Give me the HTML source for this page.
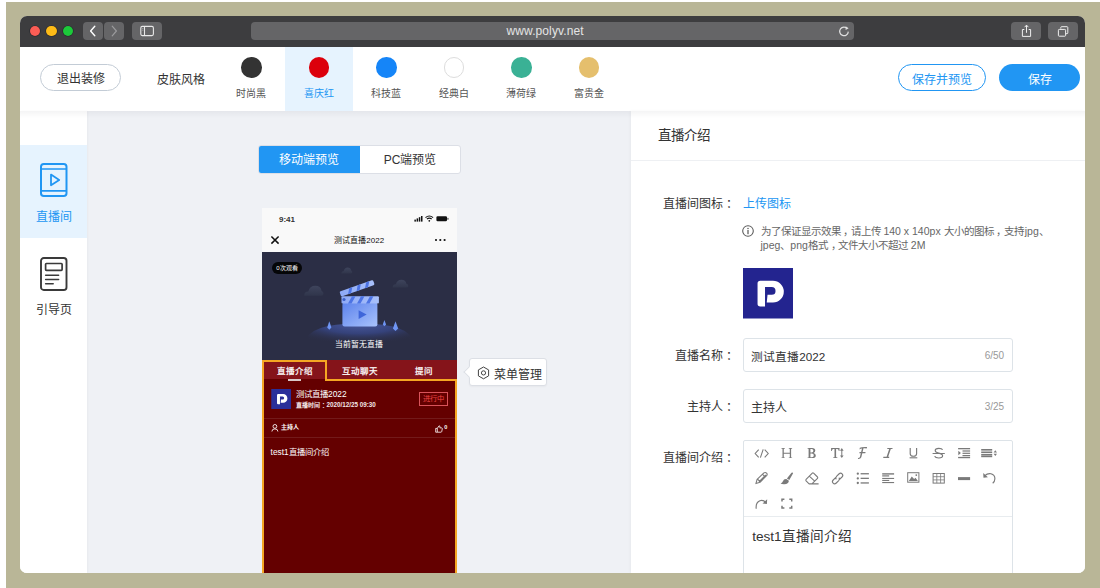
<!DOCTYPE html>
<html lang="zh-CN">
<head>
<meta charset="utf-8">
<style>
*{box-sizing:border-box;margin:0;padding:0}
html,body{width:1100px;height:588px;overflow:hidden;background:#fff;font-family:"Liberation Sans",sans-serif;color:#333}
.abs{position:absolute}
#bg{position:absolute;left:6px;top:2px;width:1094px;height:586px;background:#b9b697}
#win{position:absolute;left:20px;top:16px;width:1065px;height:557px;border-radius:7px;overflow:hidden;background:#fff}
#tb{position:absolute;left:0;top:0;width:1065px;height:30.5px;background:#3d3d3f}
.tl{position:absolute;top:10.1px;width:10.2px;height:10.2px;border-radius:50%;box-shadow:0 0 0 0.6px rgba(20,20,30,0.55)}
.tbtn{position:absolute;top:6px;height:18px;background:#656567;border-radius:4px}
#hdr{position:absolute;left:0;top:30.5px;width:1065px;height:64.5px;background:#fff}
.sw{position:absolute;top:0;width:67.5px;height:64.5px}
.sw .c{position:absolute;left:23.5px;top:10.5px;width:20.5px;height:20.5px;border-radius:50%}
.sw .t{position:absolute;left:0;width:67.5px;top:40px;text-align:center;font-size:10px;line-height:14px;color:#555}
.lbl{font-size:12px;line-height:16px;color:#333;text-align:right;white-space:nowrap}
.inp{width:270px;height:33.2px;border:1px solid #dde3e8;border-radius:3px;background:#fff}
.cnt{position:absolute;right:7.5px;top:9.5px;font-size:10px;line-height:14px;color:#999}
.co{display:inline-block;width:12px;text-align:center;position:relative;left:3px}
.cm{position:relative;left:0.28em}
.pill{position:absolute;border-radius:14px;font-size:12px;text-align:center}
</style>
</head>
<body>
<div id="bg"></div>
<div id="win">
  <div id="tb">
    <div class="tl" style="left:10.1px;background:#fb5d55"></div>
    <div class="tl" style="left:26.4px;background:#fdbb17"></div>
    <div class="tl" style="left:42.6px;background:#1cc93a"></div>
    <div class="tbtn" style="left:63px;width:20px"><svg width="20" height="18" viewBox="0 0 20 18"><path d="M11.8 4.2 L7.6 9 L11.8 13.8" fill="none" stroke="#fff" stroke-width="1.4" stroke-linecap="round" stroke-linejoin="round"/></svg></div>
    <div class="tbtn" style="left:84px;width:20px"><svg width="20" height="18" viewBox="0 0 20 18"><path d="M8.2 4.2 L12.4 9 L8.2 13.8" fill="none" stroke="#9a9a9c" stroke-width="1.2" stroke-linecap="round" stroke-linejoin="round"/></svg></div>
    <div class="tbtn" style="left:112.4px;width:30px"><svg width="30" height="18" viewBox="0 0 30 18"><rect x="8.8" y="4.4" width="12.6" height="9.2" rx="1.5" fill="none" stroke="#e8e8e8" stroke-width="1.1"/><line x1="12.5" y1="4.4" x2="12.5" y2="13.6" stroke="#e8e8e8" stroke-width="1.1"/><line x1="10.3" y1="6.5" x2="11.3" y2="6.5" stroke="#bbb" stroke-width="0.8"/><line x1="10.3" y1="8.2" x2="11.3" y2="8.2" stroke="#bbb" stroke-width="0.8"/></svg></div>
    <div class="tbtn" style="left:230.5px;width:603px"><div class="abs" style="left:256px;top:1px;font-size:12px;line-height:16px;color:#e4e4e4;letter-spacing:0.1px">www.polyv.net</div><svg class="abs" style="left:585px;top:2px" width="16" height="14" viewBox="0 0 16 14"><path d="M11.3 4.6 A4.3 4.3 0 1 0 12.3 7.6" fill="none" stroke="#e0e0e0" stroke-width="1.2"/><path d="M9.6 2.2 L12.6 4.3 L9.6 6 Z" fill="#e0e0e0"/></svg></div>
    <div class="tbtn" style="left:991px;width:30px"><svg width="30" height="18" viewBox="0 0 30 18"><path d="M13.3 7.5 H11.4 V14.4 H19.6 V7.5 H17.7" fill="none" stroke="#eee" stroke-width="1"/><line x1="15.5" y1="3.3" x2="15.5" y2="10.8" stroke="#eee" stroke-width="1"/><path d="M13.6 5.2 L15.5 3.1 L17.4 5.2" fill="none" stroke="#eee" stroke-width="1"/></svg></div>
    <div class="tbtn" style="left:1027.7px;width:30.3px"><svg width="30" height="18" viewBox="0 0 30 18"><path d="M12.8 6.6 V5.5 Q12.8 4.7 13.6 4.7 H19 Q19.8 4.7 19.8 5.5 V10.9 Q19.8 11.7 19 11.7 H17.9" fill="none" stroke="#eee" stroke-width="1"/><rect x="10.4" y="7.4" width="7.2" height="6.8" rx="0.8" fill="none" stroke="#eee" stroke-width="1"/></svg></div>
  </div>
  <div id="hdr">
    <div class="pill" style="left:20.4px;top:17.7px;width:80.7px;height:26.5px;border:1px solid #c3ccd6;line-height:29.5px;color:#333">退出装修</div>
    <div class="abs" style="left:136.5px;top:25.3px;font-size:12px;line-height:16px;color:#333">皮肤风格</div>
    <div class="sw" style="left:197.5px"><div class="c" style="background:#333"></div><div class="t">时尚黑</div></div>
    <div class="sw" style="left:265px;background:#e6f3fe"><div class="c" style="background:#dc000c"></div><div class="t" style="color:#2196f3">喜庆红</div></div>
    <div class="sw" style="left:332.5px"><div class="c" style="background:#1585f8"></div><div class="t">科技蓝</div></div>
    <div class="sw" style="left:400px"><div class="c" style="background:#fff;border:1px solid #ddd"></div><div class="t">经典白</div></div>
    <div class="sw" style="left:467.5px"><div class="c" style="background:#3ab195"></div><div class="t">薄荷绿</div></div>
    <div class="sw" style="left:535px"><div class="c" style="background:#e5bf6d"></div><div class="t">富贵金</div></div>
    <div class="pill" style="left:878px;top:17.5px;width:87.5px;height:27px;border:1px solid #2196f3;line-height:30px;color:#2196f3">保存并预览</div>
    <div class="pill" style="left:979.3px;top:17.5px;width:81px;height:27px;background:#2196f3;line-height:32px;color:#fff">保存</div>
  </div>
  <div id="main" class="abs" style="left:0;top:95px;width:1065px;height:462px;background:#eff1f5">
    <div id="hshadow" class="abs" style="left:0;top:0;width:1065px;height:7px;background:linear-gradient(rgba(0,0,20,0.045),rgba(0,0,20,0));z-index:5"></div>
    <!-- sidebar -->
    <div class="abs" style="left:0;top:0;width:67px;height:462px;background:#fff;box-shadow:1px 0 2px rgba(0,0,0,0.03)">
      <div class="abs" style="left:0;top:34px;width:67px;height:92.5px;background:#e6f3fe"></div>
      <svg class="abs" style="left:19px;top:51px" width="30" height="36" viewBox="0 0 30 36"><rect x="2" y="2" width="25.5" height="32" rx="2.8" fill="none" stroke="#2196f3" stroke-width="2"/><line x1="2" y1="7" x2="27.5" y2="7" stroke="#2196f3" stroke-width="1.7"/><line x1="2" y1="28.9" x2="27.5" y2="28.9" stroke="#2196f3" stroke-width="1.7"/><path d="M12 12.6 L20.2 17.9 L12 23.2 Z" fill="none" stroke="#2196f3" stroke-width="1.8" stroke-linejoin="round"/></svg>
      <div class="abs" style="left:0;width:68px;top:97.8px;text-align:center;font-size:12px;line-height:16px;color:#2196f3">直播间</div>
      <svg class="abs" style="left:19px;top:145px" width="30" height="36" viewBox="0 0 30 36"><rect x="2" y="2" width="25.5" height="32" rx="2.8" fill="none" stroke="#3a3a3a" stroke-width="1.9"/><rect x="6.6" y="7.5" width="16.5" height="6.8" rx="0.8" fill="none" stroke="#3a3a3a" stroke-width="1.7"/><line x1="6.6" y1="19.2" x2="19.6" y2="19.2" stroke="#3a3a3a" stroke-width="1.5" stroke-linecap="round"/><line x1="6.6" y1="23.5" x2="19.6" y2="23.5" stroke="#3a3a3a" stroke-width="1.5" stroke-linecap="round"/><line x1="6.6" y1="27.7" x2="14.2" y2="27.7" stroke="#3a3a3a" stroke-width="1.5" stroke-linecap="round"/></svg>
      <div class="abs" style="left:0;width:68px;top:191px;text-align:center;font-size:12px;line-height:16px;color:#333">引导页</div>
    </div>
    <!-- preview tabs -->
    <div class="abs" style="left:238px;top:34px;width:202.6px;height:28.6px;border-radius:3px;overflow:hidden;background:#fff;border:1px solid #dcdfe6">
      <div class="abs" style="left:-1px;top:-1px;width:101.5px;height:28.6px;background:#2196f3;color:#fff;font-size:12px;line-height:31px;text-align:center">移动端预览</div>
      <div class="abs" style="left:100.5px;top:-1px;width:101px;height:28.6px;color:#333;font-size:12px;line-height:31px;text-align:center">PC端预览</div>
    </div>
    <!-- phone -->
    <div id="phone" class="abs" style="left:242px;top:97px;width:194.5px;height:365px;background:#640000;overflow:hidden">
      <div class="abs" style="left:0;top:0;width:194.5px;height:44px;background:#f9f9f9">
        <div class="abs" style="left:17px;top:6.9px;font-size:8px;line-height:10px;font-weight:bold;color:#333">9:41</div>
        <svg class="abs" style="left:150px;top:7px" width="40" height="8" viewBox="0 0 40 8">
          <rect x="2.4" y="4.6" width="1.5" height="2" fill="#111"/><rect x="4.6" y="3.4" width="1.5" height="3.2" fill="#111"/><rect x="6.8" y="2.2" width="1.5" height="4.4" fill="#111"/><rect x="9" y="1" width="1.5" height="5.6" fill="#111"/>
          <path d="M13.5 2.6 Q17.3 -0.6 21.1 2.6" fill="none" stroke="#111" stroke-width="1.1"/><path d="M14.9 4 Q17.3 2.2 19.7 4" fill="none" stroke="#111" stroke-width="1.1"/><circle cx="17.3" cy="5.8" r="0.9" fill="#111"/>
          <rect x="24.4" y="1.3" width="10.6" height="5" rx="1.2" fill="#111"/><rect x="35.5" y="2.9" width="0.9" height="1.8" fill="#111"/>
        </svg>
        <svg class="abs" style="left:8px;top:27px" width="10" height="10" viewBox="0 0 10 10"><path d="M1.4 1.5 L8.6 8.6 M8.6 1.5 L1.4 8.6" stroke="#111" stroke-width="1.5"/></svg>
        <div class="abs" style="left:0;width:194.5px;top:27.3px;text-align:center;font-size:8px;line-height:11px;color:#111">测试直播2022</div>
        <svg class="abs" style="left:172px;top:29px" width="14" height="6" viewBox="0 0 14 6"><circle cx="2" cy="3" r="1.1" fill="#111"/><circle cx="6.3" cy="3" r="1.1" fill="#111"/><circle cx="10.6" cy="3" r="1.1" fill="#111"/></svg>
      </div>
      <div class="abs" style="left:0;top:44px;width:194.5px;height:108px;background:#2b2e45;overflow:hidden">
        <svg class="abs" style="left:0;top:-0.8px" width="194.5" height="108.6" viewBox="0 0 194.5 108.6">
          <defs>
            <radialGradient id="hill" cx="0.5" cy="0" r="0.6" fx="0.5" fy="0"><stop offset="0" stop-color="#40508f"/><stop offset="0.6" stop-color="#34406f"/><stop offset="1" stop-color="#2b2e45" stop-opacity="0"/></radialGradient>
            <linearGradient id="body" x1="0" y1="0" x2="1" y2="1"><stop offset="0" stop-color="#5c82ec"/><stop offset="1" stop-color="#a9c3fc"/></linearGradient>
            <linearGradient id="strip" x1="0" y1="0" x2="1" y2="0"><stop offset="0" stop-color="#8eaaf6"/><stop offset="1" stop-color="#a8c0fa"/></linearGradient>
          </defs>
          <radialGradient id="hill2" cx="0.5" cy="0" r="0.75" gradientTransform="translate(0.5 0) scale(1 1.4) translate(-0.5 0)"><stop offset="0" stop-color="#4a5a9e"/><stop offset="0.5" stop-color="#35427a"/><stop offset="1" stop-color="#2b2e45" stop-opacity="0"/></radialGradient>
          <linearGradient id="cloud" x1="0" y1="0" x2="0" y2="1"><stop offset="0" stop-color="#3e445c"/><stop offset="1" stop-color="#30354b"/></linearGradient>
          <path d="M44 92 Q44 72.4 97.3 72.4 Q150.6 72.4 150.6 92 Z" fill="url(#hill2)"/>
          <path d="M42.2 44.8 Q42.2 40.6 46.3 40.6 Q47.6 34.8 53.3 34.8 Q58.8 34.8 59.6 39.9 Q61.5 40.6 61.5 42.6 Q61.5 44.8 59.2 44.8 Z" fill="url(#cloud)"/>
          <path d="M79.3 22.5 Q79.3 20 81.7 20 Q82.5 16.4 85.6 16.4 Q88.7 16.4 89.2 19.4 Q90.3 19.9 90.3 21.1 Q90.3 22.5 89 22.5 Z" fill="url(#cloud)"/>
          <path d="M130.7 36.6 Q130.7 33.3 133.9 33.3 Q135 28.7 139.4 28.7 Q143.7 28.7 144.4 32.7 Q146.3 33.3 146.3 34.9 Q146.3 36.6 144.5 36.6 Z" fill="url(#cloud)"/>
          <rect x="80.4" y="51.5" width="35" height="24" rx="2.2" fill="url(#body)"/>
          <rect x="79.5" y="45.3" width="37.4" height="7.3" rx="1" fill="url(#strip)"/>
          <g fill="#4d74e4"><path d="M86 52.6 L90 45.3 L93.5 45.3 L89.5 52.6Z"/><path d="M95 52.6 L99 45.3 L102.5 45.3 L98.5 52.6Z"/><path d="M104 52.6 L108 45.3 L111.5 45.3 L107.5 52.6Z"/></g>
          <g transform="rotate(-19.5 79.2 45.6)">
            <rect x="79.2" y="40.4" width="35.5" height="5.2" rx="1.2" fill="url(#strip)"/>
            <g fill="#4d74e4"><path d="M86.5 45.6 L89.5 40.4 L92.8 40.4 L89.8 45.6Z"/><path d="M95.5 45.6 L98.5 40.4 L101.8 40.4 L98.8 45.6Z"/><path d="M104.5 45.6 L107.5 40.4 L110.8 40.4 L107.8 45.6Z"/></g>
          </g>
          <circle cx="82" cy="48.5" r="1.6" fill="#3c5fc8"/>
          <path d="M96.6 59.2 L104.6 63.6 L96.6 68 Z" fill="#3f66da"/>
          <path d="M67.3 70.2 L69.4 76.5 L67.3 78.8 L65.2 76.5 Z" fill="#6f95f3"/>
          <path d="M122.4 69.1 L124.1 73.6 L122.4 75.2 L120.8 73.6 Z" fill="#6f95f3"/>
          <path d="M133.5 70.2 L136.2 77.5 L133.5 80.1 L130.9 77.5 Z" fill="#6f95f3"/>
        </svg>
        <div class="abs" style="left:10px;top:9.5px;width:30px;height:12.4px;border-radius:6.2px;background:#050608;color:#fff;font-size:6px;line-height:12.4px;text-align:center">0次观看</div>
        <div class="abs" style="left:0;width:194.5px;top:88px;text-align:center;font-size:7.8px;line-height:10px;color:#fff">当前暂无直播</div>
      </div>
      <div class="abs" style="left:0;top:152px;width:194.5px;height:19px;background:#85141a">
        <div class="abs" style="left:0;top:0;width:65px;height:19.2px;color:#fff;font-size:8.5px;line-height:17px;padding-top:3px;-webkit-text-stroke:0.25px #fff;text-align:center">直播介绍</div>
        <div class="abs" style="left:26.3px;top:19.2px;width:12.7px;height:1.6px;background:#d9c9c9"></div>
        <div class="abs" style="left:65px;top:0;width:65px;height:19.2px;color:#fff;font-size:8.5px;line-height:17px;padding-top:3px;-webkit-text-stroke:0.25px #fff;text-align:center">互动聊天</div>
        <div class="abs" style="left:130px;top:0;width:64.5px;height:19.2px;color:#fff;font-size:8.5px;line-height:17px;padding-top:3px;-webkit-text-stroke:0.25px #fff;text-align:center">提问</div>
      </div>
      <!-- orange outline -->
      <div class="abs" style="left:0;top:152px;width:65.3px;height:20px;border:2px solid #f5a623;border-bottom:none"></div>
      <div class="abs" style="left:0;top:171px;width:194.5px;height:200px;border:2px solid #f5a623;border-top:none"></div>
      <div class="abs" style="left:63.3px;top:171px;width:131.2px;height:2px;background:#f5a623"></div>
      <!-- content -->
      <svg class="abs" style="left:8.6px;top:181px" width="20.5" height="20" viewBox="0 0 50 50"><rect width="50" height="50" fill="#2a2f9a"/><path d="M14.4 15.4 Q14.4 12.7 17.1 12.7 H29.65 A10.75 10.75 0 0 1 29.65 34.2 H23.5 L24.3 26.5 H28.4 A3.8 3.8 0 0 0 28.4 18.9 H21.8 V38.2 H17.1 Q14.4 38.2 14.4 35.5 Z" fill="#fff"/></svg>
      <div class="abs" style="left:34px;top:181px;font-size:8.4px;line-height:11px;color:#fff">测试直播2022</div>
      <div class="abs" style="left:34px;top:193px;font-size:6px;line-height:8px;color:#f3e6e6;font-weight:bold;letter-spacing:0px">直播时间<span style="display:inline-block;width:6.5px;text-align:center;position:relative;left:1.5px">：</span><span style="font-size:6.3px">2020/12/25 09:30</span></div>
      <div class="abs" style="left:157px;top:184.3px;width:29.1px;height:13.3px;border:1px solid #d9535a;color:#ee4545;font-size:7.3px;line-height:11.3px;text-align:center">进行中</div>
      <div class="abs" style="left:2px;top:209.8px;width:190.5px;height:1px;background:#731a1a"></div>
      <svg class="abs" style="left:8.5px;top:216px" width="8" height="8" viewBox="0 0 8 8"><circle cx="3.9" cy="2.4" r="1.9" fill="none" stroke="#fff" stroke-width="0.85"/><path d="M0.9 7.5 Q0.9 4.9 3.9 4.9 Q6.9 4.9 6.9 7.5" fill="none" stroke="#fff" stroke-width="0.85"/></svg>
      <div class="abs" style="left:18.6px;top:215px;font-size:6px;line-height:9px;color:#fff;font-weight:bold">主持人</div>
      <svg class="abs" style="left:172.8px;top:216.5px" width="8" height="8" viewBox="0 0 8 8"><path d="M0.7 3.4 H2.3 V7.2 H0.7 Z M2.3 3.4 L4 0.8 Q5.2 0.8 5 2.3 L4.8 2.9 H6.8 Q7.5 3.1 7.3 3.9 L6.7 6.7 Q6.5 7.2 6 7.2 H2.3" fill="none" stroke="#fff" stroke-width="0.8" stroke-linejoin="round"/></svg>
      <div class="abs" style="left:182.3px;top:214.5px;font-size:5.5px;line-height:8px;color:#fff;font-weight:bold">0</div>
      <div class="abs" style="left:2px;top:228.8px;width:190.5px;height:1px;background:#731a1a"></div>
      <div class="abs" style="left:8.6px;top:237.8px;font-size:8.3px;line-height:12px;color:#fff">test1直播间介绍</div>
    </div>
    <!-- popup -->
    <div class="abs" style="left:448.7px;top:247px;width:78.7px;height:28.4px;background:#fff;border:1px solid #dcdfe5;border-radius:3px;box-shadow:0 1px 2px rgba(0,0,0,0.04)">
      <div class="abs" style="left:-5px;top:8.5px;width:8px;height:8px;background:#fff;border-left:1px solid #dcdfe5;border-bottom:1px solid #dcdfe5;transform:rotate(45deg)"></div>
      <svg class="abs" style="left:7px;top:7px" width="13" height="14" viewBox="0 0 13 14"><path d="M6.5 1 L11.6 3.9 V9.9 L6.5 12.8 L1.4 9.9 V3.9 Z" fill="none" stroke="#444" stroke-width="1" stroke-linejoin="round"/><circle cx="6.5" cy="6.9" r="2.1" fill="none" stroke="#444" stroke-width="1"/></svg>
      <div class="abs" style="left:24.5px;top:7.6px;font-size:12px;line-height:16px;color:#333">菜单管理</div>
    </div>
    <!-- right panel -->
    <div class="abs" style="left:611px;top:0;width:454px;height:462px;background:#fff;box-shadow:-1px 0 3px rgba(0,0,0,0.035)">
      <div class="abs" style="left:27.4px;top:15.2px;font-size:13.5px;line-height:19px;color:#333">直播介绍</div>
      <div class="abs" style="left:0;top:49px;width:454px;height:1px;background:#eef0f3"></div>
      <div class="abs lbl" style="right:350px;top:84.5px">直播间图标<span class="co">：</span></div>
      <div class="abs" style="left:111.5px;top:84.5px;font-size:12px;line-height:16px;color:#2196f3">上传图标</div>
      <svg class="abs" style="left:111px;top:114px" width="12" height="12" viewBox="0 0 12 12"><circle cx="6" cy="6" r="5.3" fill="none" stroke="#555" stroke-width="1.05"/><circle cx="6" cy="3.5" r="0.75" fill="#555"/><rect x="5.4" y="5" width="1.2" height="4.2" fill="#555"/></svg>
      <div class="abs" style="left:129.5px;top:113px;width:300px;font-size:10.5px;line-height:14px;color:#666">为了保证显示效果<span class="cm">，</span>请上传 140 x 140px 大小的图标<span class="cm">，</span>支持<span style="margin-left:1.2px">jpg</span>、<br>jpeg、png格式<span class="cm">，</span>文件大小不超过 2M</div>
      <svg class="abs" style="left:111.5px;top:157px" width="50.5" height="50.5" viewBox="0 0 50 50"><rect width="50" height="50" fill="#23248f"/><path d="M14.4 15.4 Q14.4 12.7 17.1 12.7 H29.65 A10.75 10.75 0 0 1 29.65 34.2 H23.5 L24.3 26.5 H28.4 A3.8 3.8 0 0 0 28.4 18.9 H21.8 V38.2 H17.1 Q14.4 38.2 14.4 35.5 Z" fill="#fff"/></svg>
      <div class="abs lbl" style="right:350px;top:236.5px">直播名称<span class="co">：</span></div>
      <div class="abs inp" style="left:111.7px;top:227.4px"><span style="position:absolute;left:7.5px;top:10px;font-size:11.7px;line-height:16px;color:#333">测试直播2022</span><span class="cnt">6/50</span></div>
      <div class="abs lbl" style="right:350px;top:287.5px">主持人<span class="co">：</span></div>
      <div class="abs inp" style="left:111.7px;top:278.4px"><span style="position:absolute;left:7.5px;top:10px;font-size:12px;line-height:16px;color:#333">主持人</span><span class="cnt">3/25</span></div>
      <div class="abs lbl" style="right:350px;top:338.8px">直播间介绍<span class="co">：</span></div>
      <div class="abs" style="left:111.7px;top:328.9px;width:270px;height:200px;border:1px solid #dde3e8;border-radius:2px">
        <svg class="abs" style="left:-1px;top:-1px" width="270" height="78" viewBox="742.7 439.9 270 78">
          <g fill="none" stroke="#7a7a7a" stroke-width="1.1" stroke-linecap="butt">
            <path d="M758.4 449.6 L754.9 453.4 L758.4 457.2 M762.9 449.3 L760.1 457.5 M764.4 449.6 L767.9 453.4 L764.4 457.2"/>
          </g>
          <g fill="#7a7a7a">
            <!-- H -->
            <path d="M781.2 448 H784.5 V448.7 H783.5 V452.6 H789.5 V448.7 H788.5 V448 H791.8 V448.7 H790.8 V457.3 H791.8 V458 H788.5 V457.3 H789.5 V453.6 H783.5 V457.3 H784.5 V458 H781.2 V457.3 H782.2 V448.7 H781.2 Z"/>
            <!-- B -->
            <path d="M807.3 448 H811.8 Q815 448 815 450.5 Q815 452.2 813.3 452.8 Q815.5 453.3 815.5 455.3 Q815.5 458 811.9 458 H807.3 V457.3 H808.3 V448.7 H807.3 Z M810.1 448.9 V452.4 H811.4 Q813.1 452.4 813.1 450.6 Q813.1 448.9 811.4 448.9 Z M810.1 453.3 V457.1 H811.7 Q813.5 457.1 813.5 455.2 Q813.5 453.3 811.5 453.3 Z" fill-rule="evenodd"/>
            <!-- T -->
            <path d="M830.8 448 H839.2 V451 H838.5 Q838.3 449 837 449 H835.8 V457.1 H837 V458 H833 V457.1 H834.2 V449 H833 Q831.7 449 831.5 451 H830.8 Z"/>
            <!-- arrows -->
            <path d="M841.5 448 L843.3 450.6 H842 V455.4 H843.3 L841.5 458 L839.7 455.4 H841 V450.6 H839.7 Z"/>
            <!-- script F -->
            <path d="M859.5 447.6 Q861.5 446.8 866.8 447 L866.4 448.3 Q864.5 448 863.2 448.2 L862.3 452 H865.3 L865 453.1 H862 L861 457.2 Q860.3 459 857.6 458.8 L857.8 458 Q859.3 457.8 859.6 456.8 L860.5 453.1 H859 L859.3 452 H860.8 L861.7 448.4 Q860.3 448.6 859.2 449.4 Z"/>
            <!-- I italic -->
            <path d="M887.1 447.8 H892.3 L892.1 448.8 H890.5 L887.9 456.7 H889 L888.8 457.8 H882.9 L883.1 456.7 H886.3 L888.9 448.8 H886.9 Z"/>
          </g>
          <g fill="none" stroke="#7a7a7a" stroke-width="1.15">
            <!-- U -->
            <path d="M909.9 448 V453.6 Q909.9 456.1 913.1 456.1 Q916.3 456.1 916.3 453.6 V448"/>
            <path d="M909.3 457.7 H917" stroke-width="1.1"/>
            <!-- S -->
            <path d="M942.3 449.6 Q941.6 448.2 938.5 448.2 Q934.9 448.2 934.9 450.5 Q934.9 452.3 938.4 453 Q942.3 453.8 942.3 455.7 Q942.3 457.9 938.5 457.9 Q935.2 457.9 934.3 456.1"/>
            <path d="M932.3 453.4 H944.5" stroke-width="1"/>
          </g>
          <g fill="#7a7a7a">
            <!-- indent -->
            <rect x="957.8" y="447.9" width="12" height="1.3"/><rect x="962.2" y="450.3" width="7.6" height="1.2"/><rect x="962.2" y="452.6" width="7.6" height="1.2"/><rect x="962.2" y="454.9" width="7.6" height="1.2"/><rect x="957.8" y="456.8" width="12" height="1.3"/>
            <path d="M958 450.6 L960.6 452.9 L958 455.2 Z"/>
            <!-- line height -->
            <rect x="980.9" y="448.9" width="11" height="1.6"/><rect x="980.9" y="451.4" width="11" height="1.6"/><rect x="980.9" y="453.9" width="11" height="1.6"/><rect x="980.9" y="455.7" width="11" height="1.4"/>
            <path d="M995 450.2 L996.7 452.3 H993.3 Z M995 455.8 L996.7 453.7 H993.3 Z"/>
          </g>
          <!-- row 2 -->
          <g fill="none" stroke="#7a7a7a" stroke-width="1.1" stroke-linejoin="round">
            <!-- pencil -->
            <path d="M755.6 483.5 L756.8 479.3 L763.6 472.8 Q765 471.8 766.3 473 Q767.4 474.3 766.3 475.6 L759.7 482.2 Z M757.3 479 L760.1 481.9 M762.3 474.2 L765.2 477 M758.6 481.8 L765.6 474.9"/>
          </g>
          <g fill="#7a7a7a">
            <!-- brush -->
            <path d="M786.6 478.3 L791.2 472.6 Q792.6 471.8 792.8 473.2 L789 479.9 Z"/>
            <path d="M786 478.8 L788.6 480.6 Q788.3 484 784 484.2 Q781.6 484.3 780.3 483.4 Q782.2 482.8 782.6 481.2 Q783.4 478.6 786 478.8 Z"/>
          </g>
          <g fill="none" stroke="#7a7a7a" stroke-width="1.1" stroke-linejoin="round">
            <!-- eraser -->
            <path d="M805.8 479.2 L812 473 Q812.6 472.4 813.3 473 L817.2 476.9 Q817.8 477.6 817.2 478.2 L811.6 483.8 H808.8 L805.8 480.8 Q805.2 480 805.8 479.2 Z M809 476 L814.4 481.1 M811.6 483.8 H818.3"/>
            <!-- link -->
            <path d="M835.6 477.2 L832.9 479.9 Q831.3 481.6 832.8 483.1 Q834.3 484.6 836 482.9 L838.4 480.5 Q839.8 478.9 838.6 477.6 M839 479.6 L841.7 476.9 Q843.3 475.2 841.8 473.7 Q840.3 472.2 838.6 473.9 L836.2 476.3 Q834.8 477.9 836 479.2"/>
          </g>
          <g fill="#7a7a7a">
            <!-- list -->
            <circle cx="857.5" cy="473.6" r="1.15"/><circle cx="857.5" cy="478.3" r="1.15"/><circle cx="857.5" cy="482.9" r="1.15"/>
            <rect x="860.3" y="473" width="8.3" height="1.3"/><rect x="860.3" y="477.6" width="8.3" height="1.3"/><rect x="860.3" y="482.2" width="8.3" height="1.3"/>
            <!-- align left -->
            <rect x="881.9" y="473.1" width="11.9" height="1.4"/><rect x="881.9" y="475.2" width="7" height="1.2"/><rect x="881.9" y="477.8" width="11.9" height="1.1"/><rect x="881.9" y="479.8" width="7" height="1.1"/><rect x="881.9" y="481.9" width="11.9" height="1.1"/>
            <!-- hr -->
            <rect x="957.7" y="477" width="12.1" height="3"/>
          </g>
          <g fill="none" stroke="#7a7a7a" stroke-width="1">
            <!-- image -->
            <rect x="907.4" y="472.6" width="11.2" height="9.5"/>
            <!-- table -->
            <rect x="932.8" y="473.4" width="11.2" height="9.6"/>
            <path d="M936.5 473.4 V483 M940.3 473.4 V483 M932.8 476.6 H944 M932.8 479.8 H944" stroke-width="0.8"/>
          </g>
          <path d="M908.5 481 L911.5 476.5 L913.8 479 L915.2 477.6 L917.6 481 Z" fill="#7a7a7a"/>
          <circle cx="916" cy="475" r="0.9" fill="#7a7a7a"/>
          <g fill="none" stroke="#7a7a7a" stroke-width="1.15">
            <!-- undo -->
            <path d="M984.5 475.6 Q987.3 472.9 990.7 473.6 Q994.6 474.7 994.6 478.6 Q994.5 481.4 992.4 483.1"/>
            <!-- redo -->
            <path d="M755.9 508.7 Q755.2 502.4 759.6 500.6 Q762.8 499.6 765.3 502.2"/>
            <!-- fullscreen -->
            <path d="M781.7 501.4 V499.1 H784.1 M789 499.1 H791.4 V501.4 M791.4 505.7 V508 H789 M784.1 508 H781.7 V505.7" stroke-width="1.5"/>
          </g>
          <path d="M982.9 472.9 L983.2 477.6 L987.6 477.2 Z" fill="#7a7a7a"/>
          <path d="M766.9 499.2 L766.6 503.9 L762.2 503.5 Z" fill="#7a7a7a"/>
        </svg>
        <div class="abs" style="left:0;top:75.3px;width:268px;height:1px;background:#e8ecef"></div>
        <div class="abs" style="left:8.5px;top:87px;font-size:13.6px;line-height:18px;color:#333">test1直播间介绍</div>
      </div>
    </div>
  </div>
</div>
</body>
</html>
